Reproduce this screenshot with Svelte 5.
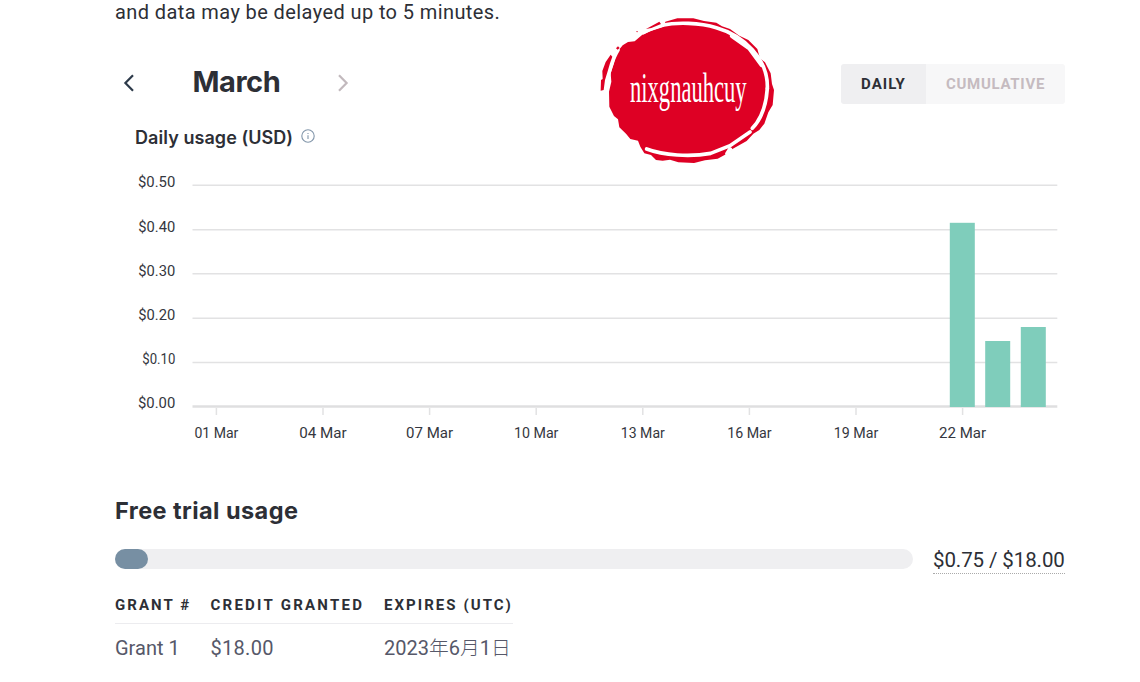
<script>
  const ticks = [
    { label: '$0.50', y: 25.3, start: 138 },
    { label: '$0.40', y: 69.8, start: 138.3 },
    { label: '$0.30', y: 113.8, start: 138.3 },
    { label: '$0.20', y: 158.2, start: 138.3 },
    { label: '$0.10', y: 202.4, start: 142.3 },
    { label: '$0.00', y: 246.5, start: 138 }
  ];
  const days = [
    ['01', 44], ['04', 47.5], ['07', 47], ['10', 44.5], ['13', 44], ['16', 44.5], ['19', 44.5], ['22', 47]
  ].map(([d, w], i) => ({ label: `${d} Mar`, w, x: 216.4 + i * 106.6 }));
  const bars = [
    { x: 949.8, top: 62.8 },
    { x: 985.2, top: 181 },
    { x: 1020.8, top: 167 }
  ];
  const used = 0.75;
  const total = 18;
</script>

<main>
  <p class="intro"><span>and data may be delayed up to 5 minutes.</span></p>

  <header>
    <div class="picker">
      <svg width="12" height="18" viewBox="0 0 12 18"><path d="M10 1.3 2.4 9l7.6 7.7" /></svg>
      <h2>March</h2>
      <svg class="off" width="12" height="18" viewBox="0 0 12 18"><path d="M2 1.3 9.6 9 2 16.7" /></svg>
    </div>
    <div class="toggle">
      <button class="on">DAILY</button>
      <button class="cumulative">CUMULATIVE</button>
    </div>
  </header>

  <div class="caption">
    <h3>Daily usage (USD)</h3>
    <svg width="14" height="14" viewBox="0 0 14 14">
      <circle cx="7" cy="7" r="6.2" />
      <path d="M7 6.3v3.8M7 3.9v1.2" />
    </svg>
  </div>

  <svg class="chart" width="950" height="290" viewBox="115 0 950 290">
    {#each ticks as t, i}
      <line x1="192.5" x2="1057.3" y1={t.y} y2={t.y} class:base={i === 5} />
      <text x={t.start} y={t.y + 1.8} textLength={175.3 - t.start} lengthAdjust="spacingAndGlyphs">{t.label}</text>
    {/each}
    {#each days as d}
      <line x1={d.x} x2={d.x} y1="248" y2="255" />
      <text x={d.x - d.w / 2} y="278" textLength={d.w} lengthAdjust="spacingAndGlyphs">{d.label}</text>
    {/each}
    {#each bars as b}
      <rect x={b.x} y={b.top} width="25" height={247 - b.top} />
    {/each}
  </svg>

  <h2 class="trial">Free trial usage</h2>
  <div class="meter">
    <div class="track"><div class="fill" style="width: {(used / total) * 100}%"></div></div>
    <span class="amount">${used.toFixed(2)} / ${total.toFixed(2)}</span>
  </div>

  <div class="grants">
    <div class="row head"><span>GRANT #</span><span class="credit">CREDIT GRANTED</span><span class="expires">EXPIRES (UTC)</span></div>
    <div class="row"><span class="g">Grant 1</span><span class="c">$18.00</span><span class="date">2023<i>年</i>6<i>月</i>1<i>日</i></span></div>
  </div>

  <svg class="stamp" width="200" height="160" viewBox="0 0 600 480">
    <path
      class="red"
      d="M58 290 57 245 64 215 62 190 72 160 80 128 98 106 114 96 134 94 157 74 180 64 222 50 226 35 262 25 310 25 342 33 379 38 396 49 420 57 448 77 475 90 502 117 510 145 525 157 542 190 546 222 552 240 548 285 535 307 523 341 508 360 490 371 470 393 426 418 416 431 405 434 383 446 345 451 312 459 265 457 240 449 218 452 198 450 183 435 163 430 151 410 144 392 121 387 108 371 88 352 84 328 72 318Z"
    />
    <path class="gap" d="M46 240C53 200 62 155 84 120M160 68C176 60 200 50 216 46C260 36 330 38 379 53C460 76 535 145 532 235" />
    <path class="gap" d="M532 235C528 295 511 330 487 355M480 366 420 407 362 430C300 442 220 436 170 417" />
    <path class="gap thick" d="M420 418 412 431M426 78 478 115 515 165" />
    <path class="red" d="M32 242 33 210 38 207 37 183 47 156 62 134 67 140 60 160 53 184 45 210 41 240ZM168 57 208 35 213 42 184 54ZM137 65l7-2-2 4zM78 115l6-6 5 5-6 5z" />
    <text x="120" y="275" textLength="350" lengthAdjust="spacingAndGlyphs">nixgnauhcuy</text>
  </svg>
</main>

<style>
  :global(body) { background: #fff; overflow: hidden; }
  main {
    position: relative;
    box-sizing: border-box;
    width: 1140px;
    height: 682px;
    padding: 0 75px 0 115px;
    overflow: hidden;
    color: #2d2f36;
    font-family: Roboto, 'Noto Sans CJK SC', sans-serif;
  }
  h2, h3, p { margin: 0; }
  h2, h3 { font-family: Inter, sans-serif; }
  .intro { height: 64px; font-size: 20px; line-height: 24px; letter-spacing: 0.4px; white-space: nowrap; }
  header { display: flex; justify-content: space-between; height: 40px; }
  .picker { display: flex; align-items: center; padding: 0 0 2px 8px; }
  .picker h2 { width: 144px; margin-left: 57.5px; padding-bottom: 2px; font-size: 29px; line-height: 36px; font-weight: 700; letter-spacing: -0.45px; }
  .picker svg { fill: none; stroke: #2d3a4a; stroke-width: 2.2; }
  .picker .off { stroke: #c2b9bd; }
  .toggle { display: flex; width: 224px; border-radius: 3px; overflow: hidden; }
  button {
    flex: 1;
    border: 0;
    padding: 1px 0 0;
    background: #f7f7f8;
    color: #c5bbc0;
    font: 700 15px/39px Roboto, sans-serif;
    letter-spacing: 0.7px;
  }
  button.on { flex: 0 0 85px; background: #efeff1; color: #2d2f36; letter-spacing: 1.1px; }
  .caption { display: flex; align-items: center; height: 56px; padding: 11px 0 0 20px; box-sizing: border-box; }
  h3 { width: 166.2px; font-size: 18px; line-height: 24px; font-weight: 600; letter-spacing: 0.06px; white-space: nowrap; }
  .caption svg { fill: none; stroke: #8296aa; stroke-width: 1.1; margin-top: -3px; }
  .chart { display: block; }
  .chart line { stroke: #e2e2e3; stroke-width: 1.5; }
  .chart line.base { stroke: #dfdfe0; stroke-width: 2.4; }
  .chart text { font-size: 14.5px; fill: #353740; }
  .chart rect { fill: #7fcdbb; }
  .trial { height: 49px; padding-top: 45px; font-size: 23.5px; line-height: 32px; font-weight: 650; letter-spacing: 0.43px; }
  .meter { display: flex; gap: 20px; align-items: flex-start; height: 46px; }
  .track { width: 798px; height: 20px; margin-top: 5px; border-radius: 10px; background: #efeff1; }
  .fill { height: 20px; border-radius: 10px; background: #778fa3; }
  .amount { width: 132px; height: 30px; border-bottom: 1px dotted #aaa; box-sizing: border-box; font-size: 20.5px; line-height: 32px; letter-spacing: -0.1px; white-space: nowrap; }
  .grants { width: 398px; }
  .row { display: grid; grid-template-columns: 95.5px 173.5px 1fr; height: 48px; line-height: 48px; font-size: 20px; color: #565869; white-space: nowrap; }
  .row.head { height: 34px; line-height: 31px; border-bottom: 1px solid #ececef; box-sizing: border-box; font-size: 15px; font-weight: 700; letter-spacing: 2.05px; color: #2d2f36; }
  .credit { letter-spacing: 2.25px; }
  .c { letter-spacing: 0.3px; }
  .date i { font-style: normal; font-weight: 300; font-size: 19.8px; }
  .stamp { position: absolute; left: 590px; top: 10px; overflow: visible; }
  .red { fill: #de0024; }
  .gap { fill: none; stroke: #fff; stroke-width: 11; stroke-linecap: round; }
  .thick { stroke-width: 13; }
  .stamp text { font-family: 'Liberation Serif', serif; font-size: 129px; fill: #fff; }
</style>
